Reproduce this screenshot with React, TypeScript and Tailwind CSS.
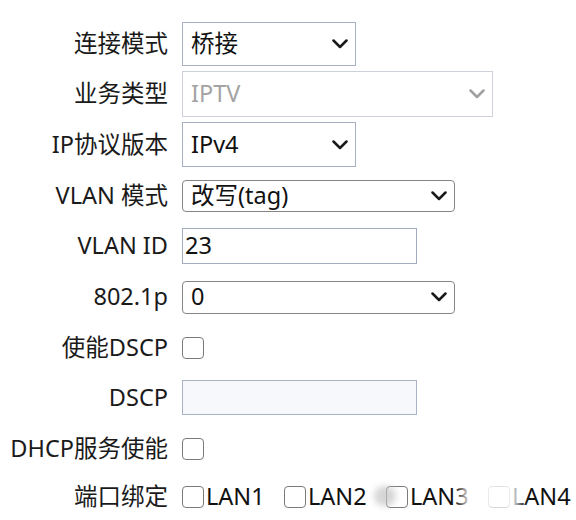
import React from "react";

const Chevron = ({ color = "#1a1a1a" }: { color?: string }) => (
  <svg width="16" height="10" viewBox="0 0 16 10" className="shrink-0">
    <path d="M1.5 1.5 L8 8 L14.5 1.5" fill="none" stroke={color} strokeWidth="2.5" strokeLinecap="round" strokeLinejoin="round" />
  </svg>
);

const Box = () => (
  <div className="w-[22px] h-[22px] rounded-[4px] border-[1.5px] border-[#7b7b7b] bg-white shrink-0" />
);

const Row = ({ label, h, children }: { label: string; h: string; children: React.ReactNode }) => (
  <div className={`flex items-center ${h}`}>
    <div className="w-[168px] shrink-0 text-right text-[#1a1a1a] whitespace-nowrap">{label}</div>
    <div className="ml-[14px] flex items-center">{children}</div>
  </div>
);

export default function App() {
  return (
    <div
      className="w-[576px] h-[520px] bg-white overflow-hidden relative pt-[19px] text-[23.5px] leading-none"
      style={{ fontFamily: '"Noto Sans", "Noto Sans CJK SC", sans-serif' }}
    >
      <Row label="连接模式" h="h-[50px]">
        <div className="w-[174px] h-[44px] border border-[#a7b0c2] flex items-center justify-between pl-[8px] pr-[7px] text-[#111]">
          <span>桥接</span>
          <Chevron />
        </div>
      </Row>
      <Row label="业务类型" h="h-[50px]">
        <div className="w-[311px] h-[46px] border border-[#cdd1d9] flex items-center justify-between pl-[8px] pr-[7px] text-[#a3a3a3]">
          <span>IPTV</span>
          <Chevron color="#a0a0a0" />
        </div>
      </Row>
      <Row label="IP协议版本" h="h-[51px]">
        <div className="w-[174px] h-[45px] border border-[#a7b0c2] flex items-center justify-between pl-[8px] pr-[7px] text-[#111]">
          <span>IPv4</span>
          <Chevron />
        </div>
      </Row>
      <Row label="VLAN 模式" h="h-[51px]">
        <div className="w-[273px] h-[32px] rounded-[4px] border border-[#858585] flex items-center justify-between pl-[8px] pr-[7px] text-[#111]">
          <span>改写(tag)</span>
          <Chevron />
        </div>
      </Row>
      <Row label="VLAN ID" h="h-[50px]">
        <div className="w-[235px] h-[36px] border border-[#a3adc0] flex items-center pl-[2px] text-[#111]">
          <span>23</span>
        </div>
      </Row>
      <Row label="802.1p" h="h-[52px]">
        <div className="w-[273px] h-[33px] rounded-[4px] border border-[#858585] flex items-center justify-between pl-[8px] pr-[7px] text-[#111]">
          <span>0</span>
          <Chevron />
        </div>
      </Row>
      <Row label="使能DSCP" h="h-[49px]">
        <Box />
      </Row>
      <Row label="DSCP" h="h-[51px]">
        <div className="w-[235px] h-[35px] border border-[#aab3c5] bg-[#f6f8fb]" />
      </Row>
      <Row label="DHCP服务使能" h="h-[51px]">
        <Box />
      </Row>
      <Row label="端口绑定" h="h-[45px]">
        <div className="flex items-center text-[#111]">
          {["LAN1", "LAN2", "LAN3", "LAN4"].map((l) => (
            <div key={l} className="flex items-center w-[102px] shrink-0">
              <Box />
              <span className="ml-[2px]">{l}</span>
            </div>
          ))}
        </div>
      </Row>
      <div className="absolute left-[374px] top-[486px] w-[22px] h-[20px] rounded-full bg-[#c4c4c4] opacity-70 blur-[3px]" />
      <div className="absolute left-[462px] top-[480px] w-[58px] h-[32px] bg-white opacity-85 blur-[5px]" />
    </div>
  );
}
